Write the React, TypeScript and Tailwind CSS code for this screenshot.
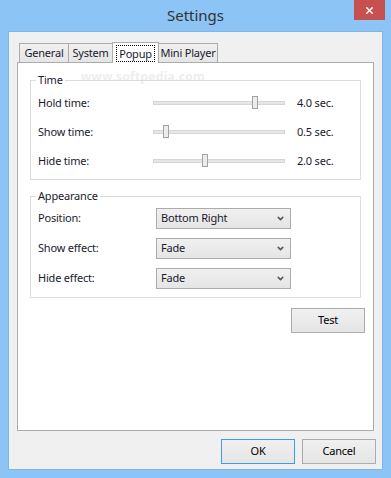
import { ChevronDown, X } from "lucide-react";

const font = { fontFamily: '"Noto Sans", "Open Sans", sans-serif' };

const Slider = ({ pos }: { pos: number }) => (
  <div className="relative w-[132px] h-[20px] flex items-center">
    <div className="w-full h-[4px] bg-[#e7e7e7] border border-[#d6d6d6]" />
    <div
      className="absolute top-[3px] w-[6px] h-[13px] bg-[#ececec] border border-[#a3a3a3]"
      style={{ left: pos }}
    />
  </div>
);

const Select = ({ value }: { value: string }) => (
  <div className="w-[135px] h-[21px] flex items-center justify-between pl-[4px] pr-[5px] border border-[#acacac] bg-gradient-to-b from-[#f0f0f0] to-[#e5e5e5]">
    <span>{value}</span>
    <ChevronDown className="w-[9px] h-[9px] text-[#555]" strokeWidth={4} />
  </div>
);

const Group = ({
  title,
  className,
  children,
}: {
  title: string;
  className: string;
  children: React.ReactNode;
}) => (
  <div className={`relative mx-[12px] border border-[#dcdcdc] ${className}`}>
    <span className="absolute -top-[9px] left-[5px] bg-white px-[2px] leading-[16px]">
      {title}
    </span>
    {children}
  </div>
);

const Button = ({ label, primary }: { label: string; primary?: boolean }) => (
  <button
    className={`w-[74px] h-[25px] border bg-gradient-to-b from-[#f0f0f0] to-[#e5e5e5] text-[#000] ${
      primary ? "border-[#3c9bf0]" : "border-[#acacac]"
    }`}
  >
    {label}
  </button>
);

const Tab = ({ label, w }: { label: string; w: string }) => (
  <div
    className={`h-[19px] ${w} -ml-px first:ml-0 flex items-center justify-center border border-b-0 border-[#acacac] bg-gradient-to-b from-[#f0f0f0] to-[#e5e5e5]`}
  >
    {label}
  </div>
);

export default function App() {
  const timeRows = [
    { label: "Hold time:", pos: 99, value: "4.0 sec." },
    { label: "Show time:", pos: 10, value: "0.5 sec." },
    { label: "Hide time:", pos: 49, value: "2.0 sec." },
  ];
  const appearanceRows = [
    { label: "Position:", value: "Bottom Right" },
    { label: "Show effect:", value: "Fade" },
    { label: "Hide effect:", value: "Fade" },
  ];

  return (
    <div
      className="w-[391px] h-[478px] bg-[#8bc4f5] flex flex-col text-[11px] tracking-[-0.2px] text-[#1a1a2e]"
      style={font}
    >
      <div className="relative h-[31px] flex items-center justify-center">
        <span className="text-[15px] tracking-normal text-[#333]">Settings</span>
        <div className="absolute right-[6px] top-0 w-[31px] h-[20px] bg-[#c75050] flex items-center justify-center">
          <X className="w-[11px] h-[11px] text-white" strokeWidth={3} />
        </div>
      </div>

      <div className="flex-1 mx-[8px] mb-[8px] bg-[#f0f0f0] border border-[#7fb6e6] flex flex-col">
        <div className="relative pl-[10px] pt-[9px] flex items-end h-[30px]">
          <Tab label="General" w="w-[50px]" />
          <Tab label="System" w="w-[45px]" />
          <div className="relative z-10 h-[21px] -mb-px w-[47px] -ml-[1px] flex items-center justify-center border border-b-0 border-[#acacac] bg-white">
            <span className="border border-dotted border-black px-[2px] leading-[15px]">Popup</span>
          </div>
          <Tab label="Mini Player" w="w-[60px]" />
          <span className="absolute left-[72px] top-[36px] text-[12px] font-bold text-[#eeeeee] tracking-wide">
            www.softpedia.com
          </span>
        </div>

        <div className="ml-[8px] mr-[8px] h-[369px] bg-white border border-[#acacac] flex flex-col pt-[17px]">
          <Group title="Time" className="pt-[12px] pb-[8px] pl-[7px]">
            <div className="flex flex-col gap-[9px]">
              {timeRows.map((r) => (
                <div key={r.label} className="flex items-center h-[20px]">
                  <span className="w-[115px]">{r.label}</span>
                  <Slider pos={r.pos} />
                  <span className="ml-[12px]">{r.value}</span>
                </div>
              ))}
            </div>
          </Group>

          <Group title="Appearance" className="mt-[16px] pt-[11px] pb-[8px] pl-[7px]">
            <div className="flex flex-col gap-[9px]">
              {appearanceRows.map((r) => (
                <div key={r.label} className="flex items-center h-[21px]">
                  <span className="w-[118px]">{r.label}</span>
                  <Select value={r.value} />
                </div>
              ))}
            </div>
          </Group>

          <div className="flex justify-end pr-[8px] mt-[10px]">
            <Button label="Test" />
          </div>
        </div>

        <div className="flex justify-end gap-[7px] pr-[6px] mt-[8px]">
          <Button label="OK" primary />
          <Button label="Cancel" />
        </div>
      </div>
    </div>
  );
}
